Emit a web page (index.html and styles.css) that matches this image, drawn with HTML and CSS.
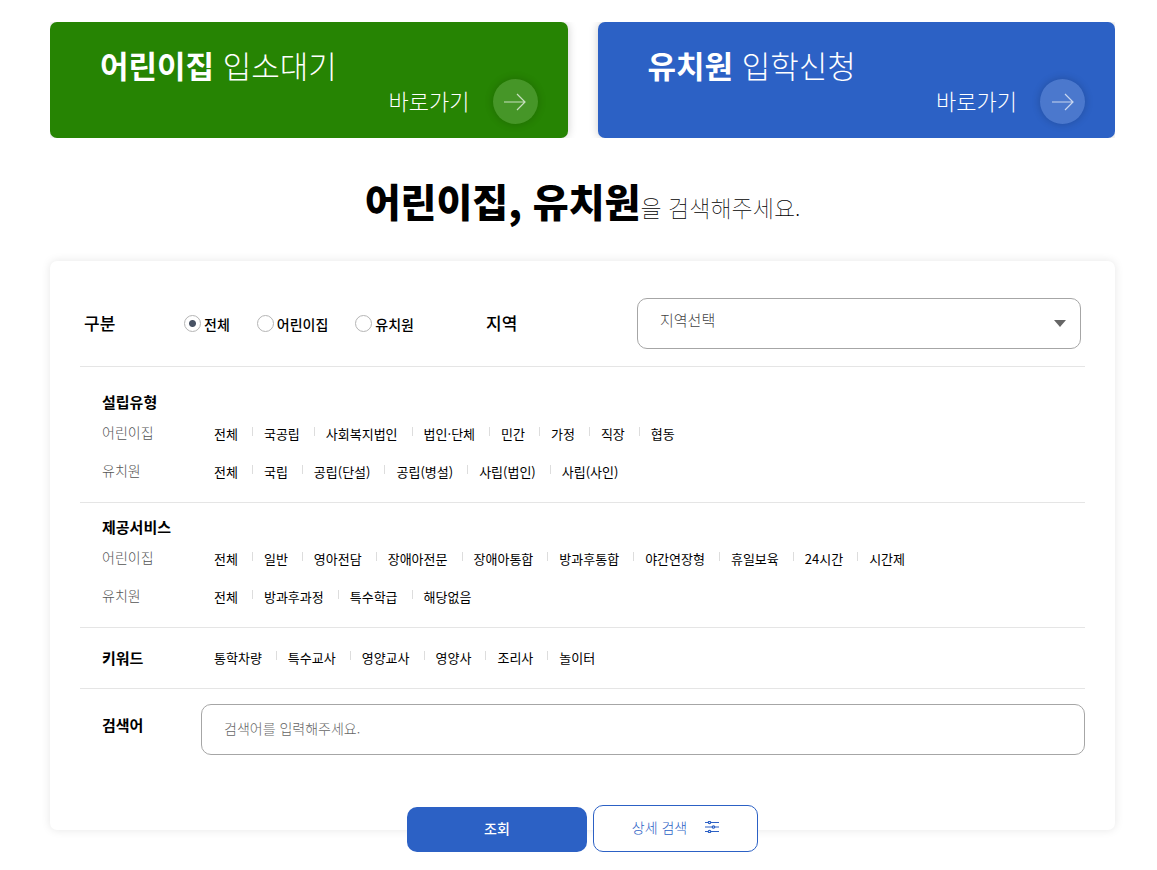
FILE: index.html
```
<!DOCTYPE html>
<html lang="ko">
<head>
    <meta charset="UTF-8">
    <meta name="viewport" content="width=device-width, initial-scale=1.0">
    <title>어린이집, 유치원 검색</title>
    <link rel="stylesheet" href="styles.css">
</head>
<body>
    <div class="container">
        <nav class="quick-links">
            <a href="#" class="quick-card green">
                <span class="quick-title"><strong>어린이집</strong> 입소대기</span>
                <span class="quick-go">
                    <span class="quick-text">바로가기</span>
                    <span class="quick-circle">
                        <svg width="22" height="18" viewBox="0 0 22 18" fill="none" stroke="currentColor" stroke-width="1.2"><path d="M0 9h21M13 1l8 8-8 8"/></svg>
                    </span>
                </span>
            </a>
            <a href="#" class="quick-card blue">
                <span class="quick-title"><strong>유치원</strong> 입학신청</span>
                <span class="quick-go">
                    <span class="quick-text">바로가기</span>
                    <span class="quick-circle">
                        <svg width="22" height="18" viewBox="0 0 22 18" fill="none" stroke="currentColor" stroke-width="1.2"><path d="M0 9h21M13 1l8 8-8 8"/></svg>
                    </span>
                </span>
            </a>
        </nav>

        <h1 class="page-title"><strong>어린이집, 유치원</strong>을 검색해주세요.</h1>

        <form class="search-panel">
            <!-- 구분 / 지역 -->
            <div class="search-row row-top">
                <span class="top-label" id="typeLabel">구분</span>
                <div class="radio-group" role="radiogroup" aria-labelledby="typeLabel">
                    <label class="radio-item"><input type="radio" name="type" checked>전체</label>
                    <label class="radio-item"><input type="radio" name="type">어린이집</label>
                    <label class="radio-item"><input type="radio" name="type">유치원</label>
                </div>
                <label class="top-label region-label" for="region">지역</label>
                <div class="select-box">
                    <select id="region">
                        <option>지역선택</option>
                    </select>
                </div>
            </div>

            <!-- 설립유형 -->
            <div class="search-row row-first">
                <h2 class="row-title">설립유형</h2>
                <div class="option-line">
                    <span class="option-label">어린이집</span>
                    <ul class="option-list">
                        <li><a href="#">전체</a></li>
                        <li><a href="#">국공립</a></li>
                        <li><a href="#">사회복지법인</a></li>
                        <li><a href="#">법인·단체</a></li>
                        <li><a href="#">민간</a></li>
                        <li><a href="#">가정</a></li>
                        <li><a href="#">직장</a></li>
                        <li><a href="#">협동</a></li>
                    </ul>
                </div>
                <div class="option-line">
                    <span class="option-label">유치원</span>
                    <ul class="option-list">
                        <li><a href="#">전체</a></li>
                        <li><a href="#">국립</a></li>
                        <li><a href="#">공립(단설)</a></li>
                        <li><a href="#">공립(병설)</a></li>
                        <li><a href="#">사립(법인)</a></li>
                        <li><a href="#">사립(사인)</a></li>
                    </ul>
                </div>
            </div>

            <!-- 제공서비스 -->
            <div class="search-row">
                <h2 class="row-title">제공서비스</h2>
                <div class="option-line">
                    <span class="option-label">어린이집</span>
                    <ul class="option-list">
                        <li><a href="#">전체</a></li>
                        <li><a href="#">일반</a></li>
                        <li><a href="#">영아전담</a></li>
                        <li><a href="#">장애아전문</a></li>
                        <li><a href="#">장애아통합</a></li>
                        <li><a href="#">방과후통합</a></li>
                        <li><a href="#">야간연장형</a></li>
                        <li><a href="#">휴일보육</a></li>
                        <li><a href="#">24시간</a></li>
                        <li><a href="#">시간제</a></li>
                    </ul>
                </div>
                <div class="option-line">
                    <span class="option-label">유치원</span>
                    <ul class="option-list">
                        <li><a href="#">전체</a></li>
                        <li><a href="#">방과후과정</a></li>
                        <li><a href="#">특수학급</a></li>
                        <li><a href="#">해당없음</a></li>
                    </ul>
                </div>
            </div>

            <!-- 키워드 -->
            <div class="search-row row-keyword">
                <div class="option-line">
                    <h2 class="row-title">키워드</h2>
                    <ul class="option-list">
                        <li><a href="#">통학차량</a></li>
                        <li><a href="#">특수교사</a></li>
                        <li><a href="#">영양교사</a></li>
                        <li><a href="#">영양사</a></li>
                        <li><a href="#">조리사</a></li>
                        <li><a href="#">놀이터</a></li>
                    </ul>
                </div>
            </div>

            <!-- 검색어 -->
            <div class="search-row row-text">
                <label class="row-title" for="keyword">검색어</label>
                <input type="text" class="text-input" id="keyword" placeholder="검색어를 입력해주세요.">
            </div>

            <div class="button-group">
                <button type="button" class="search-button">조회</button>
                <button type="button" class="detail-button">
                    상세 검색
                    <svg width="14" height="12" viewBox="0 0 14 12" fill="none" stroke="currentColor" stroke-width="1.2">
                        <path d="M0 1.5h3M6 1.5h8M0 6h7M10 6h4M0 10.5h3M6 10.5h8"/>
                        <circle cx="4.5" cy="1.5" r="1.2"/>
                        <circle cx="8.5" cy="6" r="1.2"/>
                        <circle cx="4.5" cy="10.5" r="1.2"/>
                    </svg>
                </button>
            </div>
        </form>
    </div>
</body>
</html>
```
FILE: styles.css
```
* {
    margin: 0;
    padding: 0;
    box-sizing: border-box;
    font-family: 'Noto Sans CJK KR', sans-serif;
}

body {
    background-color: #fff;
    color: #000;
}

a {
    color: inherit;
    text-decoration: none;
}

.container {
    padding: 22px 42px 40px 50px;
}

/* 바로가기 카드 */
.quick-links {
    display: grid;
    grid-template-columns: 1fr 1fr;
    gap: 30px;
    overflow: hidden;
}

.quick-card {
    display: flex;
    flex-direction: column;
    padding: 21px 30px 14px 50px;
    border-radius: 7px;
    color: #fff;
    box-shadow: 0 0 10px rgba(0, 0, 0, 0.2);
}

.green {
    background-color: #268403;
}

.blue {
    background-color: #2c61c5;
}

.quick-title {
    font-size: 31px;
    font-weight: 300;
    line-height: 44px;
}

.quick-title strong {
    font-weight: 700;
}

.quick-go {
    display: flex;
    align-items: center;
    justify-content: flex-end;
    gap: 23px;
    margin-top: -8px;
    font-size: 22px;
    font-weight: 300;
    line-height: 30px;
}

.quick-text {
    padding-bottom: 4px;
}

.quick-circle {
    display: flex;
    align-items: center;
    justify-content: center;
    width: 45px;
    height: 45px;
    border-radius: 50%;
    background-color: rgba(255, 255, 255, 0.15);
    box-shadow: 0 0 8px rgba(0, 0, 0, 0.2);
    color: rgba(255, 255, 255, 0.7);
}

/* 제목 */
.page-title {
    padding: 32px 0 31px;
    font-size: 23px;
    font-weight: 100;
    line-height: 24px;
    text-align: center;
}

.page-title strong {
    font-size: 39px;
    font-weight: 900;
    line-height: 60px;
}

/* 검색 영역 */
.search-panel {
    padding: 0 30px;
    border-radius: 7px;
    background-color: #fff;
    box-shadow: 0 0 10px rgba(0, 0, 0, 0.1);
}

.search-row {
    padding: 14px 0 11px 22px;
    border-bottom: 1px solid #e5e5e5;
}

.row-top {
    display: flex;
    align-items: center;
    padding: 37px 4px 17px;
}

.row-first {
    padding-top: 25px;
}

.top-label {
    width: 100px;
    padding-bottom: 2px;
    font-size: 17px;
    font-weight: 500;
    line-height: 24px;
}

.radio-group {
    display: flex;
    gap: 27px;
    width: 302px;
}

.radio-item {
    display: flex;
    align-items: center;
    gap: 3px;
    font-size: 14px;
    font-weight: 500;
    line-height: 20px;
    white-space: nowrap;
}

.radio-item input {
    appearance: none;
    width: 17px;
    height: 17px;
    border: 1px solid #b5b5b5;
    border-radius: 50%;
    background-color: #fff;
}

.radio-item input:checked {
    background-image: radial-gradient(circle, #485264 3px, transparent 4px);
}

.region-label {
    width: 151px;
}

.select-box {
    position: relative;
    flex: 1;
}

.select-box::after {
    content: '';
    position: absolute;
    right: 15px;
    top: 22px;
    border: 6px solid transparent;
    border-top: 7px solid #666;
    border-bottom: 0;
    pointer-events: none;
}

.select-box select {
    display: block;
    appearance: none;
    width: 100%;
    height: 51px;
    padding: 0 40px 8px 22px;
    border: 1px solid #a6a6a6;
    border-radius: 10px;
    background-color: #fff;
    color: #444;
    font-size: 15px;
    font-weight: 300;
}

.row-title {
    font-size: 15px;
    font-weight: 700;
    line-height: 20px;
}

.row-title + .option-line {
    margin-top: 3px;
}

.option-line {
    display: flex;
    align-items: center;
    height: 38px;
}

.option-label {
    width: 112px;
    padding-bottom: 4px;
    color: #555;
    font-size: 14px;
    font-weight: 300;
}

.option-list {
    display: flex;
    list-style: none;
}

.option-list li {
    display: flex;
    font-size: 13px;
    line-height: 20px;
    white-space: nowrap;
}

.option-list li + li::before {
    content: '';
    width: 1px;
    height: 9px;
    margin: 3px 11px 0 14px;
    background-color: #ddd;
}

.row-keyword {
    padding-top: 11px;
}

.row-keyword .row-title {
    width: 112px;
}

.row-text {
    display: flex;
    align-items: center;
    padding: 15px 0 52px 22px;
    border-bottom: 0;
}

.row-text .row-title {
    width: 99px;
    padding-bottom: 10px;
}

.text-input {
    flex: 1;
    height: 51px;
    padding: 0 22px 4px;
    border: 1px solid #a6a6a6;
    border-radius: 10px;
    font-size: 14px;
    font-weight: 300;
}

.text-input::placeholder {
    color: #666;
}

/* 패널 하단에 걸치는 버튼 */
.button-group {
    display: flex;
    align-items: flex-end;
    justify-content: center;
    gap: 6px;
    height: 23px;
}

.button-group button {
    flex-shrink: 0;
    margin-bottom: -22px;
    padding-bottom: 3px;
    border-radius: 10px;
    font-size: 14px;
    cursor: pointer;
}

.search-button {
    width: 180px;
    height: 45px;
    border: none;
    background-color: #2c61c5;
    color: #fff;
    font-weight: 500;
}

.detail-button {
    display: flex;
    align-items: center;
    justify-content: center;
    gap: 18px;
    width: 165px;
    height: 47px;
    border: 1px solid #2c61c5;
    background-color: #fff;
    color: #2c61c5;
    font-weight: 300;
}
```
